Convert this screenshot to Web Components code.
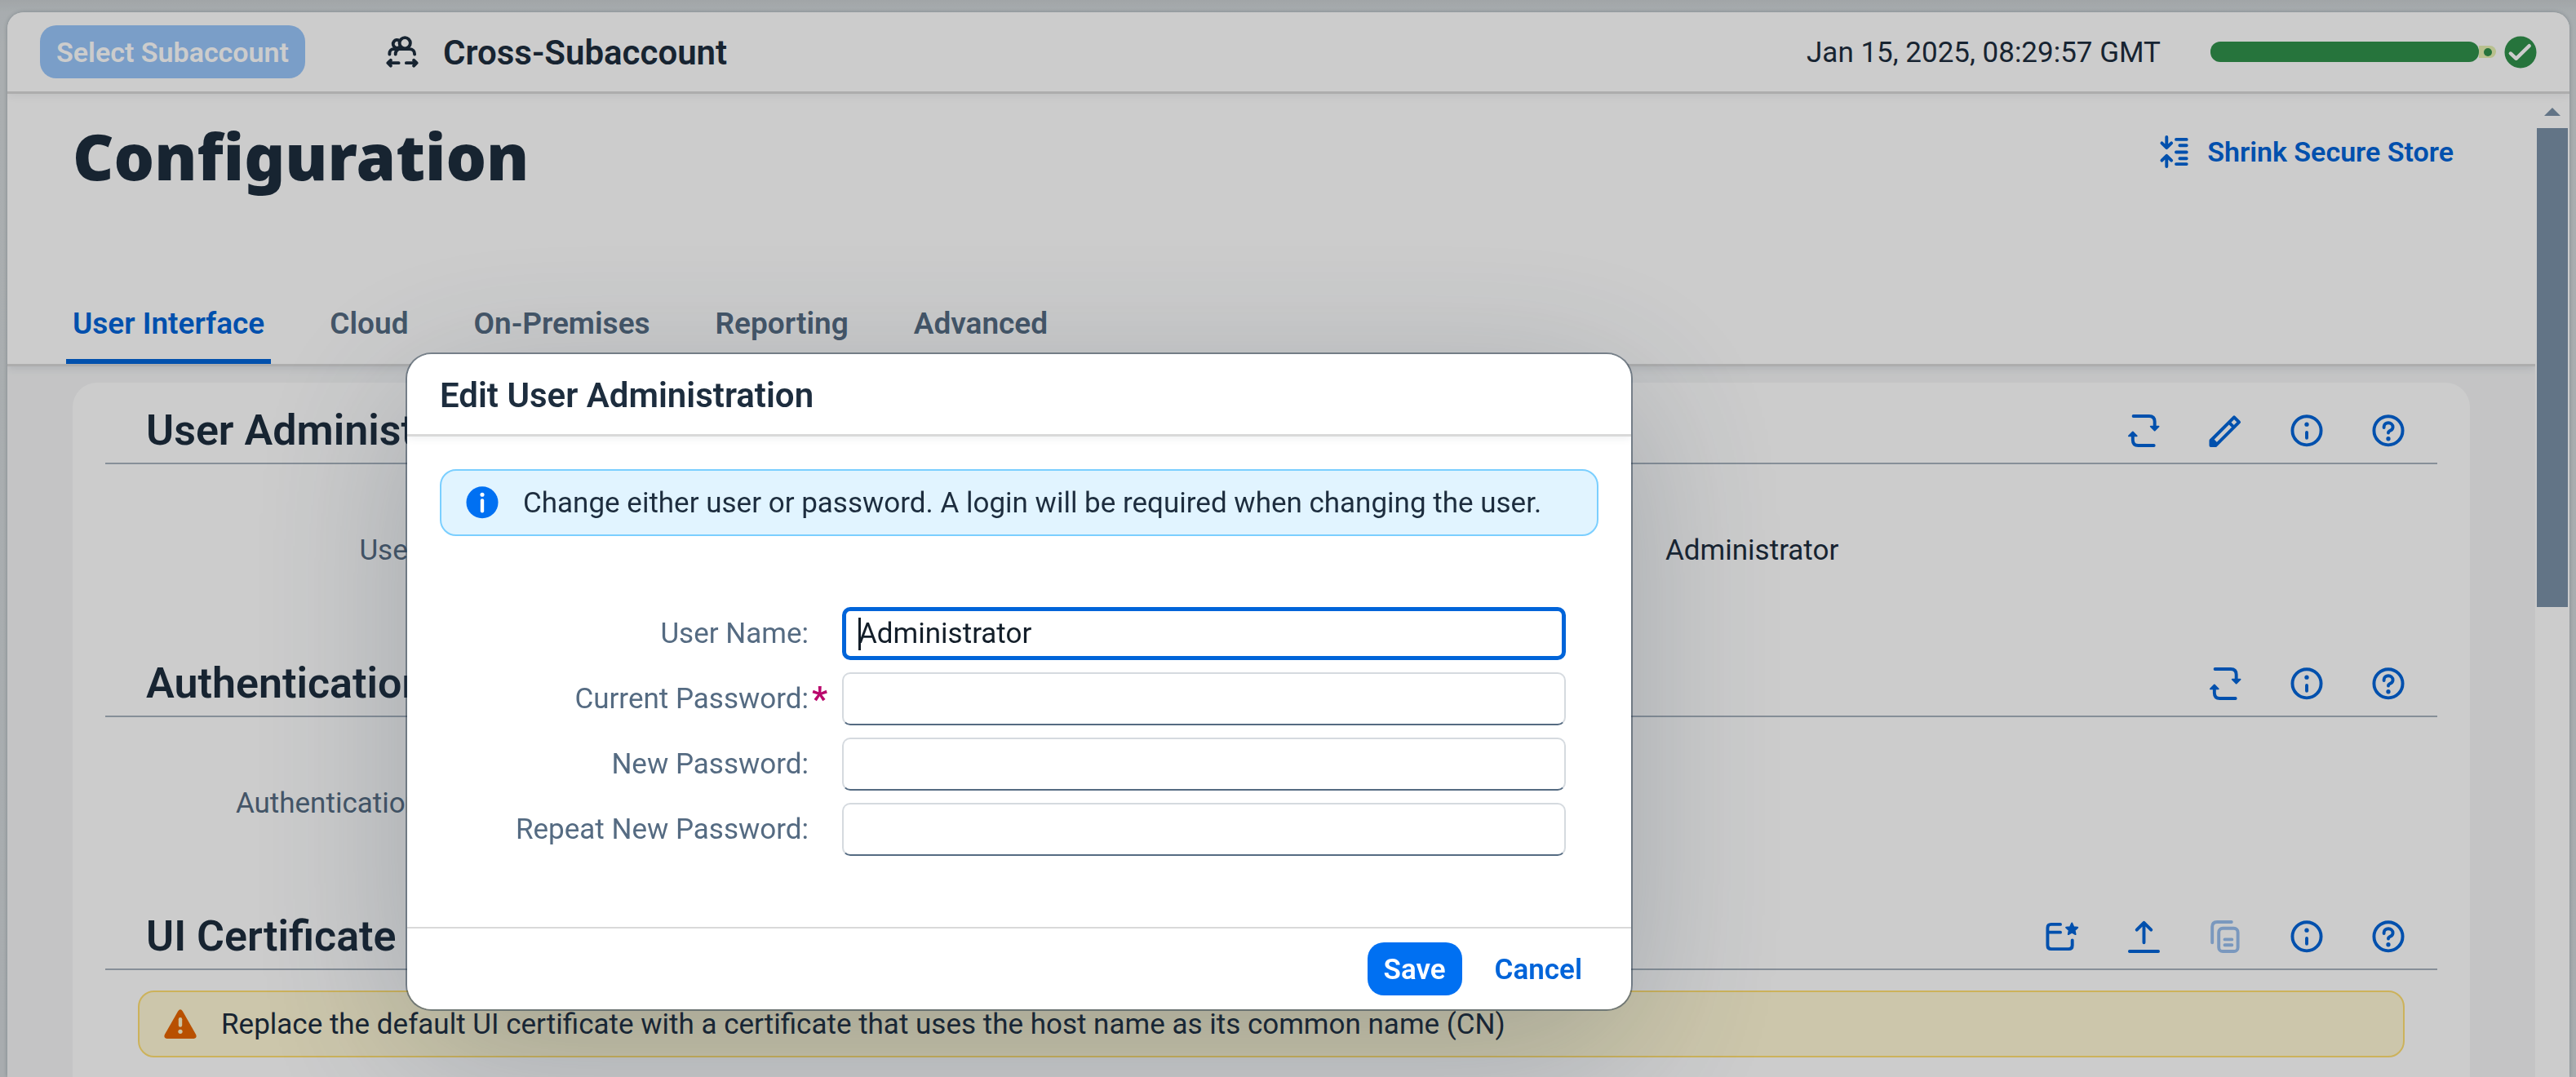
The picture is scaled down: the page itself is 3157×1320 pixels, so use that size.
<!DOCTYPE html>
<html lang="en">
<head>
<meta charset="utf-8">
<title>Configuration</title>
<style>
html, body { margin: 0; height: 100%; }
body {
  --text: #1d2d3e; --label: #556b82; --link: #0064d9; --brand: #0070f2;
  font: 400 35px/50px Roboto, "Noto Sans", sans-serif;
  color: var(--text); overflow: hidden;
}
.page { padding: 20px 80px 0; }
</style>
</head>
<body>
<app-shell>
  <shell-bar slot="bar"></shell-bar>
  <page-header slot="page"></page-header>
  <div slot="page" class="page">
    <content-card>
      <config-section heading="User Administration" icons="refresh edit info help">
        <value-row label="User Name:">Administrator</value-row>
      </config-section>
      <config-section heading="Authentication" icons="refresh info help">
        <value-row label="Authentication Mode:"></value-row>
      </config-section>
      <config-section heading="UI Certificate" icons="certificate upload copy info help">
        <message-strip kind="warning">Replace the default UI certificate with a certificate that uses the host name as its common name (CN)</message-strip>
      </config-section>
    </content-card>
  </div>
</app-shell>
<modal-dialog heading="Edit User Administration">
  <message-strip kind="info">Change either user or password. A login will be required when changing the user.</message-strip>
  <form-fields>
    <form-field label="User Name:" value="Administrator" active></form-field>
    <form-field label="Current Password:" type="password" required></form-field>
    <form-field label="New Password:" type="password"></form-field>
    <form-field label="Repeat New Password:" type="password"></form-field>
  </form-fields>
  <ui-button slot="footer" kind="primary">Save</ui-button>
  <ui-button slot="footer" kind="plain">Cancel</ui-button>
</modal-dialog>

<script>
const S = 'fill="none" stroke="currentColor" stroke-width="4" stroke-linecap="round" stroke-linejoin="round"';
const ICONS = {
  users: `<g ${S}><circle cx="23.3" cy="9" r="6.8"/><path d="M16 5.8a5 5 0 1 0 0 8.6"/><path d="M4 23v-1c0-3 2-5.500 5-5.500h20c4 0 6.500 2.500 6.500 6.500M11.500 23c0-3 1.500-5.500 4-6.500"/><path d="M2 34h13.500M5.500 30.500L2 34l3.500 3.500M25 34h13M34.500 30.500L38 34l-3.500 3.500"/></g>`,
  refresh: `<g ${S}><path d="M7.300 2H27q7 0 7 7v7M33 39H13.500q-7 0-7-7v-6"/></g><path fill="currentColor" stroke="currentColor" stroke-width="2" stroke-linejoin="round" d="M29 15h10l-5 5zM1.500 27h10l-5-5z"/>`,
  edit: `<path fill="none" stroke="currentColor" stroke-width="4" stroke-linejoin="round" d="M2 32.800L31.300 3.500l6.200 6.200L8 39H2zM25 10l6 6"/><path fill="currentColor" d="M1 31l4-1 5 5-1 5H1z"/>`,
  info: `<g ${S}><circle cx="20" cy="20.300" r="18"/><path d="M20 22.500v7"/></g><circle cx="20" cy="12.500" r="2.700" fill="currentColor"/>`,
  help: `<g ${S}><circle cx="20" cy="20.300" r="18"/><path d="M14.500 16.500v-1c0-3 2.500-5 5.500-5s5.700 2 5.700 5.300c0 5-5.700 4-5.700 7.200"/></g><circle cx="20" cy="30.500" r="2.700" fill="currentColor"/>`,
  certificate: `<g ${S}><path d="M18 5H6.500Q2 5 2 9.500v22Q2 36 6.500 36h22q4.500 0 4.500-4.500V25M2 15h16"/></g><path fill="currentColor" stroke="currentColor" stroke-width="2" stroke-linejoin="round" d="M32.500 3.500l2.200 4.800 5 .7-3.700 3.500 1 5-4.500-2.500-4.500 2.500 1-5-3.700-3.500 5-.7z"/>`,
  upload: `<g ${S}><path d="M20.500 28V3.500M11.500 12l9-9 9 9M2.500 39h36"/></g>`,
  copy: `<g ${S}><path d="M28 2H10Q3.800 2 3.800 8v20"/><rect x="12" y="10" width="24" height="29" rx="5"/><path d="M19.500 24h9M19.500 31h9"/></g>`,
  shrink: `<g ${S}><path d="M8 2v13M2 9.500l6 6 6-6M8 39V26M2 31.500l6-6 6 6M20 5h13M24.500 12.500H33M20 21h13M24.500 29H33M20 36h13"/></g>`,
  success: `<circle cx="20" cy="20.500" r="20" fill="currentColor"/><path d="M7.500 22l7 6.500L31 12.500" fill="none" stroke="#fff" stroke-width="4.500" stroke-linecap="round" stroke-linejoin="round"/>`,
  infofill: `<circle cx="20" cy="20.300" r="20" fill="currentColor"/><circle cx="20" cy="10.500" r="2.600" fill="#fff"/><path d="M20 18v13" stroke="#fff" stroke-width="4.500" stroke-linecap="round"/>`,
  warning: `<path fill="currentColor" d="M17 4.500q3-4.500 6 0l16.500 29q2 4.500-2.500 5.500H3q-4.500-1-2.500-5.500z"/><path d="M20 14.500v7.500" stroke="#fff6cd" stroke-width="4.500" stroke-linecap="round"/><circle cx="20" cy="30" r="2.700" fill="#fff6cd"/>`
};
const icon = n => `<svg class="icon" width="40" height="40" viewBox="0 0 40 41" overflow="visible" aria-hidden="true">${ICONS[n]}</svg>`;

function define(name, render) {
  customElements.define(name, class extends HTMLElement {
    connectedCallback() {
      if (this.shadowRoot) return;
      this.attachShadow({ mode: 'open' }).innerHTML =
        '<style>*{box-sizing:border-box}:host{display:block;box-sizing:border-box}.icon{display:block;flex:none}button{font:inherit;cursor:pointer}</style>' + render(this);
    }
  });
}

define('app-shell', () => `<style>
  :host { height: 100vh; padding: 15px 8px 0 9px; background: linear-gradient(#cacfd2, #d2d8db 15px, #d5dadc 60px, #d2d8db); }
  .frame { display: flex; flex-direction: column; height: 100%; overflow: hidden; background: #f5f6f7;
    border-radius: 20px 20px 0 0; box-shadow: 0 0 5px rgba(34,53,72,.3); }
  .body { flex: 1; min-height: 0; display: flex; }
  main { flex: 1; min-width: 0; overflow: hidden; }
</style>
<div class="frame"><slot name="bar"></slot><div class="body"><main><slot name="page"></slot></main><scroll-track></scroll-track></div></div>`);

define('scroll-track', () => `<style>
  :host { width: 42px; flex: none; background: #fff; padding: 17px 2px 0; }
  .up { width: 20px; height: 10px; margin: 0 auto 15px; background: #7b91a8; clip-path: polygon(50% 0, 100% 100%, 0 100%); }
  .thumb { height: 587px; background: #7b91a8; }
</style><div class="up"></div><div class="thumb"></div>`);

define('shell-bar', () => `<style>
  :host { position: relative; flex: none; background: #fff; border-bottom: 3px solid #d9d9d9; box-shadow: 0 2px 10px rgba(34,53,72,.08); }
  header { display: flex; align-items: center; height: 97px; padding: 0 40px; }
  .title { display: flex; align-items: center; gap: 30px; margin-left: 99px; font-size: 42px; font-weight: 600; }
  .title span, time { padding-top: 2px; }
  time { margin-left: auto; }
  .meter { display: flex; align-items: center; margin: 0 10px 0 61px; }
  .bar { width: 329px; height: 25px; border-radius: 12px; background: #30914c; }
  .tail { display: flex; align-items: center; justify-content: center; width: 21px; height: 15px; border-radius: 0 8px 8px 0; background: #e6f1b2; }
  .tail i { width: 10px; height: 10px; border-radius: 5px; background: #30914c; }
  .ok { color: #30914c; }
</style>
<header><ui-button kind="disabled">Select Subaccount</ui-button>
<div class="title">${icon('users')}<span>Cross-Subaccount</span></div>
<time>Jan 15, 2025, 08:29:57 GMT</time>
<div class="meter"><div class="bar"></div><div class="tail"><i></i></div></div>
<div class="ok">${icon('success')}</div></header>`);

define('ui-button', el => `<style>
  :host { flex: none; }
  button { display: block; height: 65px; padding: 0 20px; border: 0; border-radius: 20px; font-weight: 600; line-height: 67px; }
  .primary { background: var(--brand); color: #fff; }
  .plain { background: none; color: var(--link); }
  .disabled { background: #99c6fb; color: #fff; font-size: 34px; }
</style><button type="button" class="${el.getAttribute('kind')}" ${el.getAttribute('kind') === 'disabled' ? 'disabled' : ''}><slot></slot></button>`);

define('page-header', () => `<style>
  :host { background: #fff; border-bottom: 3px solid #d9d9d9; box-shadow: 0 2px 10px rgba(34,53,72,.12); }
  .top { display: flex; justify-content: space-between; align-items: flex-start; height: 231px; padding: 26px 80px 0; }
  h1 { margin: 0; font-family: "Noto Sans", sans-serif; font-size: 78px; line-height: 100px; font-weight: 900; }
  .action { display: flex; align-items: center; gap: 18px; height: 65px; margin-top: 12px; padding: 0 20px; border: 0; background: none; color: var(--link); font-size: 34px; font-weight: 600; }
  nav { display: flex; gap: 64px; padding: 0 72px; }
  a { height: 100px; padding: 0 8px; line-height: 102px; font-size: 37px; font-weight: 600; color: var(--label); text-decoration: none; }
  a[aria-current] { color: var(--link); background: linear-gradient(var(--link), var(--link)) bottom / 100% 6px no-repeat; }
</style>
<div class="top"><h1>Configuration</h1><button class="action" type="button">${icon('shrink')}<span>Shrink Secure Store</span></button></div>
<nav><a href="#ui" aria-current="page">User Interface</a><a href="#cloud">Cloud</a><a href="#onprem">On-Premises</a><a href="#reporting">Reporting</a><a href="#advanced">Advanced</a></nav>`);

define('content-card', () => `<style>:host { background: #fff; border-radius: 30px 30px 0 0; padding: 0 40px 100px; }</style><slot></slot>`);

define('config-section', el => `<style>
  :host { min-height: 310px; }
  header { display: flex; align-items: center; height: 100px; padding: 20px 20px 0 50px; border-bottom: 2px solid #a8b3be; }
  h2 { flex: 1; margin: 0; font-size: 52px; line-height: 60px; font-weight: 600; }
  .tools { display: flex; gap: 20px; }
  button { display: block; padding: 20px; border: 0; background: none; color: var(--link); }
  button:disabled { color: #99bfee; }
</style>
<header><h2>${el.getAttribute('heading')}</h2><div class="tools">${el.getAttribute('icons').split(' ').map(n => `<button type="button" aria-label="${n}" ${n === 'copy' ? 'disabled' : ''}>${icon(n)}</button>`).join('')}</div></header>
<slot></slot>`);

define('value-row', el => `<style>
  :host { display: grid; grid-template-columns: 493fr 1419fr 946fr; padding-top: 81px; }
  .label { text-align: right; color: var(--label); white-space: nowrap; }
  .value { grid-column: 3; }
</style><span class="label">${el.getAttribute('label')}</span><span class="value"><slot></slot></span>`);

define('message-strip', el => `<style>
  :host { display: flex; align-items: center; gap: 30px; height: 82px; padding: 0 30px; border: 2px solid; border-radius: 20px; white-space: nowrap; }
  :host([kind=info]) { background: #e1f4ff; border-color: #7bcfff; }
  :host([kind=warning]) { background: #fff8d6; border-color: #ffdf72; margin: 25px 40px 0; }
  .info { color: var(--brand); } .warning { color: #e76500; }
  .text { padding-top: 2px; }
</style><span class="${el.getAttribute('kind')}">${icon(el.getAttribute('kind') === 'info' ? 'infofill' : 'warning')}</span><span class="text"><slot></slot></span>`);

define('form-fields', () => `<style>:host { display: flex; flex-direction: column; gap: 15px; padding: 87px 40px 0 0; }</style><slot></slot>`);

define('form-field', el => `<style>
  :host { display: grid; grid-template-columns: 452fr 887fr; column-gap: 41px; align-items: center; }
  label { position: relative; text-align: right; color: var(--label); white-space: nowrap; }
  .star { position: absolute; left: 100%; margin-left: 4px; color: #ba066c; font-size: 42px; font-weight: 700; }
  input { width: 100%; height: 65px; padding: 0 18px; border: 2px solid #d5dadf; border-bottom-color: #556b82; border-radius: 10px; background: #fff; font: inherit; color: #131e29; outline: none; }
  input.active { padding: 0 15px; border: 5px solid var(--link); background: linear-gradient(#131e29, #131e29) 15px 50% / 3px 40px no-repeat; }
</style><label for="f">${el.getAttribute('label')}${el.hasAttribute('required') ? '<span class="star">*</span>' : ''}</label>
<input id="f" type="${el.getAttribute('type') || 'text'}" value="${el.getAttribute('value') || ''}" class="${el.hasAttribute('active') ? 'active' : ''}">`);

define('modal-dialog', el => `<style>
  :host { position: fixed; inset: 0; background: rgba(0,0,0,.2); }
  .shade { position: absolute; left: 499px; top: 434px; width: 1500px; border-radius: 30px; box-shadow: 0 0 0 2px rgba(34,53,72,.48), 0 50px 200px rgba(34,53,72,.26); }
  section { border-radius: 30px; background: #fff; overflow: hidden; }
  header { height: 101px; padding: 0 40px; border-bottom: 3px solid #d9d9d9; box-shadow: 0 2px 10px rgba(34,53,72,.08); }
  h2 { margin: 0; font-size: 42px; line-height: 101px; font-weight: 600; }
  .content { height: 601px; padding: 40px 40px 0; }
  footer { display: flex; justify-content: flex-end; align-items: center; gap: 20px; height: 101px; padding: 0 40px; border-top: 2px solid #d9d9d9; }
</style>
<div class="shade"><section role="dialog" aria-label="${el.getAttribute('heading')}"><header><h2>${el.getAttribute('heading')}</h2></header><div class="content"><slot></slot></div><footer><slot name="footer"></slot></footer></section></div>`);
</script>
</body>
</html>
